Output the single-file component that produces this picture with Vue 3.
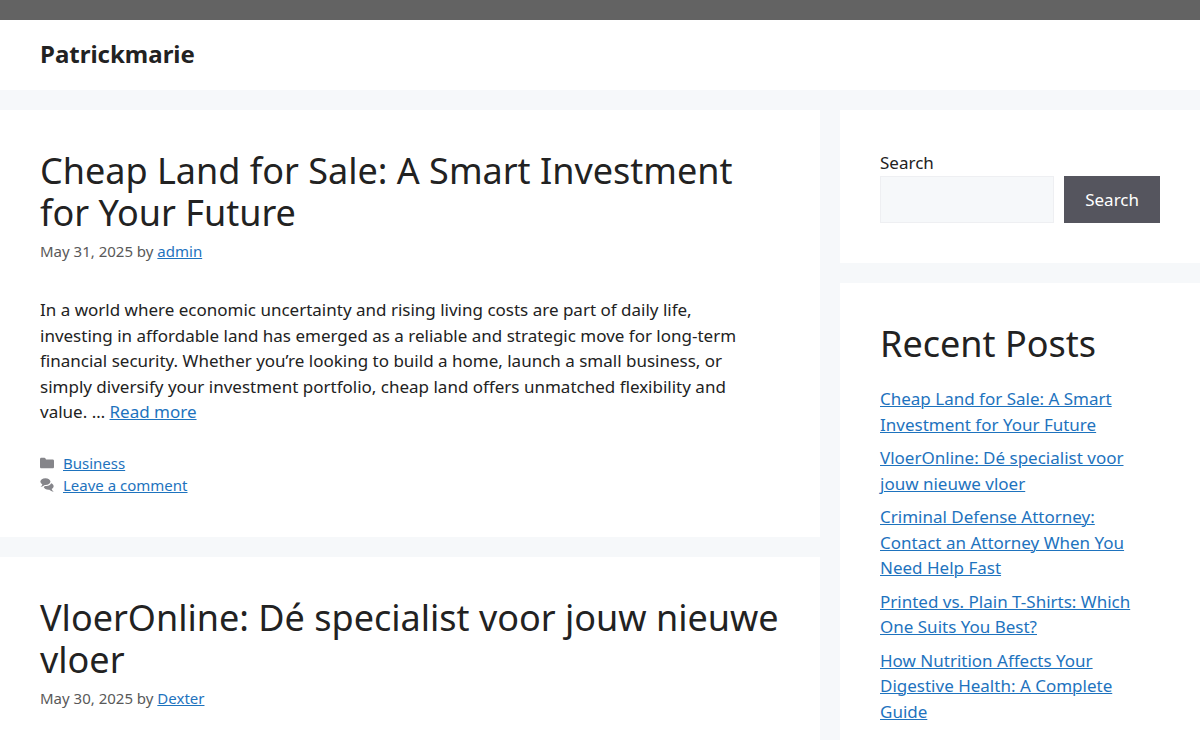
<script setup>
import { ref } from 'vue'

const query = ref('')

const posts = [
  {
    title: 'Cheap Land for Sale: A Smart Investment\nfor Your Future',
    date: 'May 31, 2025',
    author: 'admin',
    excerpt:
      'In a world where economic uncertainty and rising living costs are part of daily life,\ninvesting in affordable land has emerged as a reliable and strategic move for long-term\nfinancial security. Whether you’re looking to build a home, launch a small business, or\nsimply diversify your investment portfolio, cheap land offers unmatched flexibility and\nvalue. …',
    category: 'Business',
  },
  {
    title: 'VloerOnline: Dé specialist voor jouw nieuwe\nvloer',
    date: 'May 30, 2025',
    author: 'Dexter',
  },
]

const recent = [
  'Cheap Land for Sale: A Smart Investment for Your Future',
  'VloerOnline: Dé specialist voor jouw nieuwe vloer',
  'Criminal Defense Attorney: Contact an Attorney When You Need Help Fast',
  'Printed vs. Plain T-Shirts: Which One Suits You Best?',
  'How Nutrition Affects Your Digestive Health: A Complete Guide',
]
</script>

<template>
  <div class="page">
    <div class="top-bar"></div>
    <header class="site-header">
      <a class="brand" href="#">Patrickmarie</a>
    </header>
    <div class="columns">
      <main class="posts">
        <article v-for="post in posts" :key="post.title" class="card">
          <h2><a href="#">{{ post.title }}</a></h2>
          <div class="meta">{{ post.date }} by <a href="#">{{ post.author }}</a></div>
          <template v-if="post.excerpt">
            <p class="excerpt">{{ post.excerpt }} <a href="#">Read more</a></p>
            <footer class="entry-footer">
              <div class="entry-line">
                <svg viewBox="0 0 512 512" aria-hidden="true">
                  <path d="M0 112c0-26.510 21.490-48 48-48h110.014a48 48 0 0 1 43.592 27.907l12.349 26.791A16 16 0 0 0 228.486 128H464c26.510 0 48 21.490 48 48v224c0 26.510-21.490 48-48 48H48c-26.510 0-48-21.490-48-48V112z" />
                </svg>
                <a href="#">{{ post.category }}</a>
              </div>
              <div class="entry-line">
                <svg viewBox="0 0 512 512" aria-hidden="true">
                  <path d="M132.838 329.973a435.298 435.298 0 0 0 16.769-9.004c13.363-7.574 26.587-16.142 37.419-25.507 7.544.597 15.270.925 23.098.925 54.905 0 105.634-15.311 143.285-41.280 23.728-16.365 43.115-37.692 54.155-62.645 54.739 22.205 91.498 63.272 91.498 110.286 0 42.186-29.558 79.498-75.090 102.828 23.460 49.216 75.090 101.709 75.090 101.709s-115.837-38.350-154.424-78.460c-9.956 1.120-20.297 1.758-30.793 1.758-88.727 0-162.927-43.071-181.007-100.610z" />
                  <path d="M383.371 132.502c0 70.603-82.961 127.787-185.216 127.787-10.496 0-20.837-.639-30.793-1.757-38.587 40.093-154.424 78.429-154.424 78.429s51.630-52.472 75.090-101.670c-45.532-23.321-75.090-60.619-75.090-102.790C12.938 61.900 95.900 4.716 198.155 4.716 300.410 4.715 383.370 61.900 383.370 132.502z" />
                </svg>
                <a href="#">Leave a comment</a>
              </div>
            </footer>
          </template>
        </article>
      </main>
      <aside class="sidebar">
        <section class="card">
          <form @submit.prevent>
            <label for="search">Search</label>
            <div class="search-row">
              <input id="search" v-model="query" type="search" />
              <button type="submit">Search</button>
            </div>
          </form>
        </section>
        <section class="card">
          <h2>Recent Posts</h2>
          <ul>
            <li v-for="title in recent" :key="title"><a href="#">{{ title }}</a></li>
          </ul>
        </section>
      </aside>
    </div>
  </div>
</template>

<style>
body {
  margin: 0;
  background: #f6f8fa;
}
html {
  scrollbar-width: none;
}
</style>

<style scoped>
.page {
  color: #222;
  background: #f6f8fa;
  font: 17px/1.5 "Noto Sans", "Open Sans", sans-serif;
}
.top-bar {
  height: 20px;
  background: #636363;
}
.site-header {
  padding: 15px 40px 17px;
  background: #fff;
}
.brand {
  display: block;
  color: #222;
  font-size: 24px;
  font-weight: 700;
  line-height: 38px;
  text-decoration: none;
}
.columns {
  display: grid;
  grid-template-columns: minmax(0, 7fr) minmax(0, 3fr);
  align-items: start;
  padding-top: 20px;
}
.posts,
.sidebar {
  display: grid;
  grid-template-columns: minmax(0, 1fr);
  gap: 20px;
}
.posts {
  margin-right: 20px;
}
.card {
  padding: 40px;
  background: #fff;
}
a {
  color: #1e73be;
  text-decoration-thickness: 1px;
}
h2 {
  margin: 0;
  font-size: 36px;
  font-weight: 400;
  line-height: 42px;
  white-space: pre-line;
}
h2 a {
  color: inherit;
  text-decoration: none;
}
.meta {
  margin-top: 6px;
  color: #595959;
  font-size: 15px;
  line-height: 22px;
}
.excerpt {
  margin: 35px 0 27px;
  white-space: pre-line;
}
.entry-footer {
  padding-bottom: 1px;
  font-size: 15px;
  line-height: 22px;
}
.entry-line {
  display: flex;
  align-items: center;
  gap: 9px;
}
.entry-line svg {
  width: 14px;
  height: 14px;
  fill: #85858a;
}
form label {
  display: block;
}
.search-row {
  display: flex;
  gap: 10px;
}
input {
  flex: 1;
  min-width: 0;
  box-sizing: border-box;
  padding: 10px 15px;
  border: 1px solid #eeeff2;
  border-radius: 0;
  background: #f6f8fa;
  color: #222;
  font: inherit;
  appearance: none;
}
button {
  padding: 10px 21px;
  border: 0;
  background: #55555e;
  color: #fff;
  font: inherit;
}
ul {
  display: grid;
  gap: 8px;
  margin: 21px 0 0;
  padding: 0;
  list-style: none;
}
</style>
